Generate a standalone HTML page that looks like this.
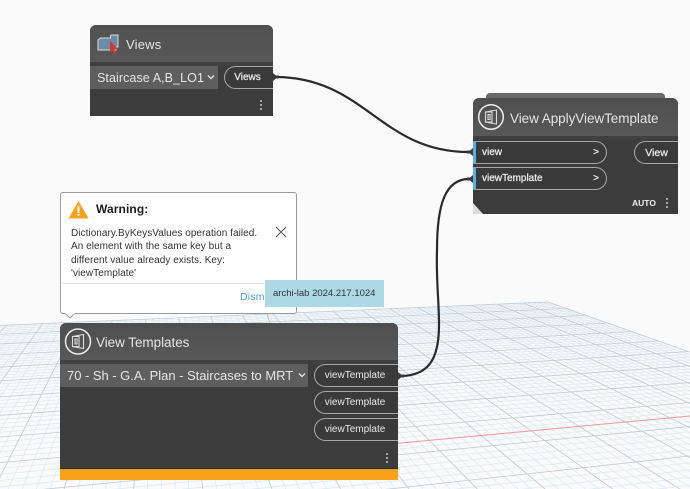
<!DOCTYPE html>
<html><head><meta charset="utf-8">
<style>
*{box-sizing:border-box}
html,body{margin:0;padding:0;background:#fafafa;width:690px;height:489px;overflow:hidden}
#s{position:relative;width:690px;height:489px;overflow:hidden;background:#fafafa;font-family:"Liberation Sans",sans-serif}
svg.l{position:absolute;left:0;top:0}
.node{position:absolute;background:#3c3c3c;border-radius:6px 6px 0 0;overflow:hidden}
.hd{position:absolute;left:0;top:0;right:0;background:#555;border-bottom:4px solid #404040;color:#e6e6e6}
.t{position:absolute;color:#e4e4e4;white-space:nowrap;line-height:16px}
.dd{position:absolute;left:0;background:#5e5e5e;color:#e6e6e6;white-space:nowrap;line-height:24px;height:23px}
.pill{position:absolute;background:#3a3a3a;border:1px solid #a8a8a8;border-right:0;border-radius:12px 0 0 12px;height:23px;color:#e8e8e8;font-size:10px;line-height:22px;text-align:center}
.inp{position:absolute;left:0;width:134px;height:23px;background:#3a3a3a;border:1px solid #a8a8a8;border-left:3px solid #5ab0e2;border-radius:0 12px 12px 0;color:#eee;font-size:10px;-webkit-text-stroke:.25px #eee;line-height:21px;padding-left:6px}
.inp b{position:absolute;right:7px;top:0;font-weight:normal}
.med{-webkit-text-stroke:.25px #eee}
.dots{position:absolute;width:2px;height:10px;background:radial-gradient(circle at 1px 1px,#bbb 1px,transparent 1.1px) 0 0/2px 4px}
</style></head><body>
<div id="s">
<svg class="l" id="g" width="690" height="489"></svg>
<script>
(function(){var C=[548,302],A=[3092,193],B=[157,164];
function P(s,r){var d=1+s+r;return[(C[0]+s*A[0]+r*B[0])/d,(C[1]+s*A[1]+r*B[1])/d]}
var h='',ds=.00195,dr=.0088,Sm=-.2,Rm=-.7,i,mj;
function ln(p,q,mj){h+='<line x1="'+p[0].toFixed(1)+'" y1="'+p[1].toFixed(1)+'" x2="'+q[0].toFixed(1)+'" y2="'+q[1].toFixed(1)+'" stroke="'+(mj?'#c0cbd1':'#dce8f0')+'" stroke-width="'+(mj?.8:.7)+'"/>'}
for(var k=0;k<2;k++){
for(i=0;i*ds<.2;i++){mj=i%5==0;if(mj==!!k)ln(P(-i*ds,0),P(-i*ds,Rm),mj)}
for(i=0;i*dr<.7;i++){mj=i%5==0;if(mj==!!k)ln(P(0,-i*dr),P(Sm,-i*dr),mj)}
}
document.getElementById('g').innerHTML=h})();
</script>
<svg class="l" width="690" height="489">
<line x1="398" y1="443.2" x2="690" y2="416" stroke="#f49a9a" stroke-width="1"/>
<line x1="267" y1="314" x2="270" y2="323" stroke="#9ccf9c" stroke-width=".8"/>
</svg>

<!-- Views -->
<div class="node" style="left:90px;top:25px;width:183px;height:91px">
<div class="hd" style="height:41px;background:linear-gradient(#505050,#585858)"></div>
<svg class="l" width="40" height="34"><path d="M8 15L10.500 13H20.500V10.500L22 10H28V22H26V25H8Z" fill="#6c8aa5" stroke="#d8dde0" stroke-width="1"/><path d="M20 16L28 24L24.500 24.500L26 28L24 29L22.500 25.500L20 27.500Z" fill="#cf3a2e"/></svg>
<div class="t" style="left:36px;top:12px;font-size:13px;letter-spacing:.2px">Views</div>
<div class="dd" style="top:41px;width:128px;padding-left:7px;font-size:12.500px;letter-spacing:.08px">Staircase A,B_LO1</div>
<svg class="l" style="left:117px;top:49px" width="9" height="7"><path d="M1 1.500l3 3 3-3" fill="none" stroke="#e6e6e6" stroke-width="1.300"/></svg>
<div class="pill med" style="left:134px;top:41px;width:49px;padding-right:3px">Views</div>
<div class="dots" style="left:170px;top:75px"></div>
</div>

<!-- ApplyViewTemplate -->
<div style="position:absolute;left:486px;top:93px;width:179px;height:6px;background:#6a6a6a;border-radius:4px 4px 0 0"></div>
<div class="node" style="left:473px;top:98px;width:205px;height:116px">
<div class="hd" style="height:42px;background:linear-gradient(#4e4e4e,#585858)"></div>
<svg class="l" width="40" height="40"><circle cx="18" cy="19" r="12.300" fill="none" stroke="#eee" stroke-width="1.500"/><path d="M12.500 14L23.500 12V26L12.500 24ZM12.500 14H19V24H12.500M15 16.500H17V21.500H15Z" fill="none" stroke="#ddd" stroke-width="1.100"/></svg>
<div class="t" style="left:37px;top:13px;font-size:13.500px;letter-spacing:-.05px">View ApplyViewTemplate</div>
<div class="inp" style="top:43px">view<b>&gt;</b></div>
<div class="inp" style="top:69px">viewTemplate<b>&gt;</b></div>
<div class="pill med" style="left:161px;top:43px;width:44px;font-size:10.500px">View</div>
<div class="t" style="left:159px;top:97px;font-size:8.500px;font-weight:bold;color:#eee">AUTO</div>
<div class="dots" style="left:193px;top:100px"></div>
<svg class="l" width="205" height="116"><path d="M0 105l10 11H0z" fill="#dcdcdc"/></svg>
</div>

<!-- Wires -->
<svg class="l" width="690" height="489" style="z-index:3">
<g fill="none" stroke="#2a2a2a" stroke-width="2.200">
<path d="M275 77C365 77 380 152 469 152"/>
<path d="M402 376C428 375 439 360 439 325C439 300 436 280 437 250C437 205 445 179 469 179"/>
</g>
<g fill="#3a3a3a"><path d="M273 73l3 2.500h3v3h-3l-3 2.500z"/><path d="M473 148l-3 2.500h-3v3h3l3 2.500z"/><path d="M473 175l-3 2.500h-3v3h3l3 2.500z"/><path d="M398 372l3 2.500h3v3h-3l-3 2.500z"/></g>
</svg>

<!-- View Templates -->
<div class="node" style="left:60px;top:323px;width:338px;height:157px">
<div class="hd" style="height:41px;background:linear-gradient(#4e4e4e,#585858)"></div>
<svg class="l" width="40" height="40"><circle cx="18" cy="18.500" r="12.500" fill="none" stroke="#eee" stroke-width="1.500"/><path d="M12.500 13.500L23.500 11.500V25.500L12.500 23.500ZM12.500 13.500H19V23.500H12.500M15 16H17V21H15Z" fill="none" stroke="#ddd" stroke-width="1.100"/></svg>
<div class="t" style="left:36px;top:12px;font-size:13.500px;letter-spacing:-.05px">View Templates</div>
<div class="dd" style="top:41px;width:248px;padding-left:7px;font-size:13px;letter-spacing:-.03px">70 - Sh - G.A. Plan - Staircases to MRT</div>
<svg class="l" style="left:238px;top:49px" width="9" height="7"><path d="M1 1.500l3 3 3-3" fill="none" stroke="#e6e6e6" stroke-width="1.300"/></svg>
<div class="pill" style="left:254px;top:41px;width:84px;padding-right:3px">viewTemplate</div>
<div class="pill" style="left:254px;top:68px;width:84px;padding-right:3px">viewTemplate</div>
<div class="pill" style="left:254px;top:95px;width:84px;padding-right:3px">viewTemplate</div>
<div class="dots" style="left:326px;top:130px"></div>
<div style="position:absolute;left:0;right:0;top:145px;height:1px;background:#2c2c2c"></div>
<div style="position:absolute;left:0;right:0;top:146px;height:11px;background:#f9a11b"></div>
</div>

<!-- Warning -->
<div style="position:absolute;left:60px;top:192px;width:237px;height:122px;background:#fff;border:1px solid #9a9a9a;border-radius:3px;z-index:4;overflow:hidden">
<svg class="l" style="left:7px;top:7px" width="22" height="20"><path d="M10.500 1L20.500 18.500H.5z" fill="#fba21c"/><path d="M9.500 6.500h2v6.500h-2zM9.500 14h2v2h-2z" fill="#fff"/></svg>
<div style="position:absolute;left:35px;top:8px;font-size:12px;font-weight:bold;color:#1c1c1c;letter-spacing:.1px;line-height:16px">Warning:</div>
<div style="position:absolute;left:10px;top:34px;font-size:10px;line-height:13.400px;color:#333;white-space:nowrap;letter-spacing:.05px">Dictionary.ByKeysValues operation failed.<br>An element with the same key but a<br>different value already exists. Key:<br>'viewTemplate'</div>
<svg class="l" style="left:214px;top:33px" width="12" height="12"><path d="M1 1l10 10M11 1L1 11" stroke="#555" stroke-width="1" fill="none"/></svg>
<div style="position:absolute;left:1px;right:1px;top:90px;height:1px;background:#e4e4e4"></div>
<div style="position:absolute;left:179px;top:97px;font-size:10.500px;color:#4a9fd8;line-height:14px;letter-spacing:.2px">Dismiss</div>
</div>
<svg class="l" style="left:64px;top:313px;z-index:5" width="14" height="7"><path d="M1 0l5 5 5-5" fill="#fff"/><path d="M2 1l4 4 4-4" fill="none" stroke="#9a9a9a" stroke-width="1"/></svg>
<div style="position:absolute;left:265px;top:280px;width:119px;height:27px;background:#add8e6;z-index:6;font-size:9.500px;color:#333;line-height:27px;padding-left:8px;white-space:nowrap">archi-lab 2024.217.1024</div>
</div>
</body></html>
